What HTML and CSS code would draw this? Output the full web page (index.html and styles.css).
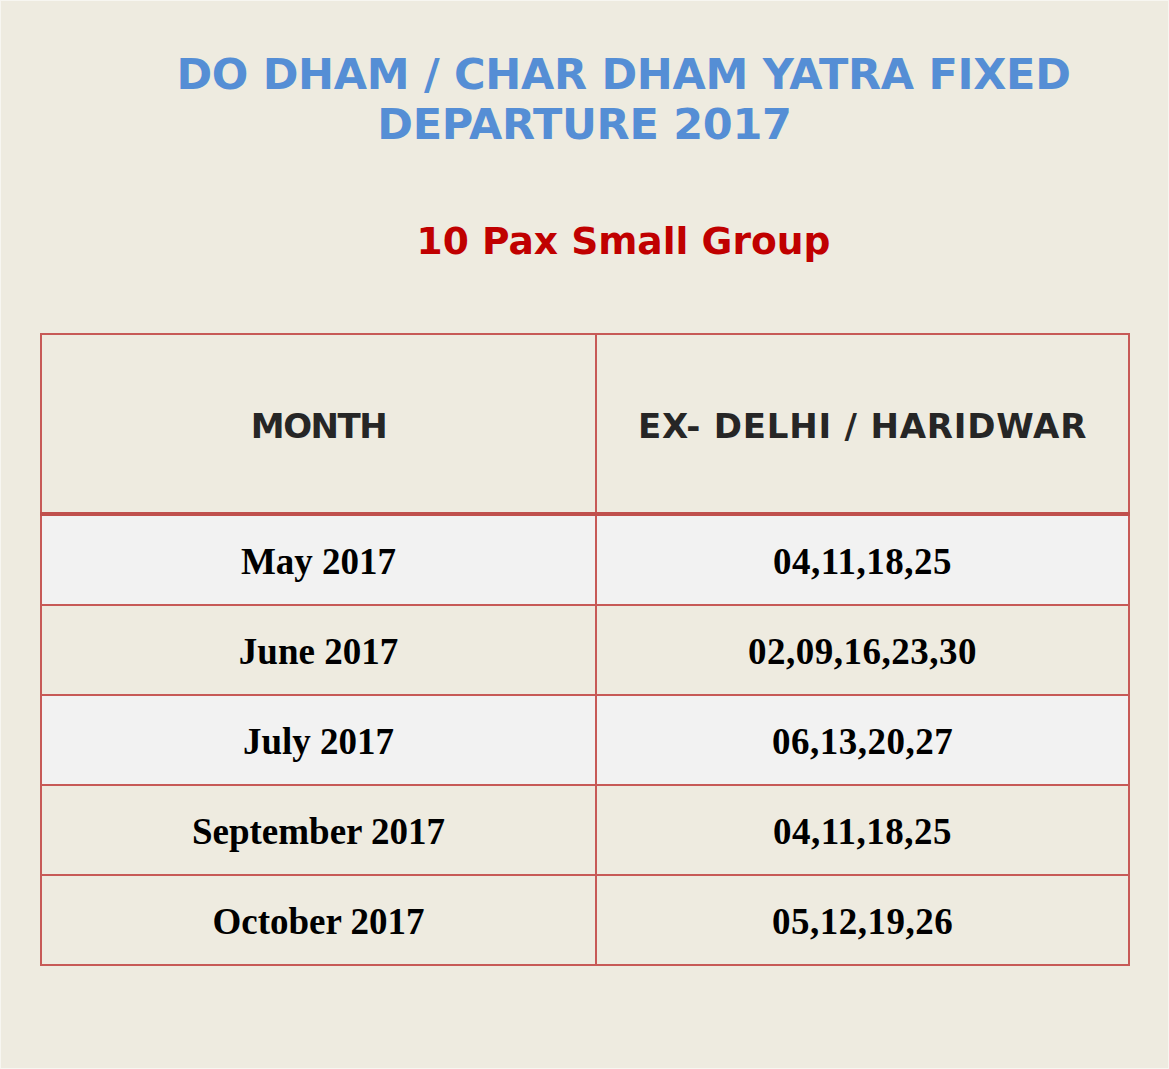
FILE: index.html
```html
<!DOCTYPE html>
<html>
<head>
<meta charset="utf-8">
<link rel="stylesheet" href="styles.css">
</head>
<body>
<div class="page">
  <h1 class="title">DO DHAM / CHAR DHAM YATRA FIXED<br>DEPARTURE 2017</h1>
  <h2 class="subtitle">10 Pax Small Group</h2>
  <table class="dates">
    <thead>
      <tr><th class="c1">MONTH</th><th class="c2">EX- DELHI / HARIDWAR</th></tr>
    </thead>
    <tbody>
      <tr class="alt"><td>May 2017</td><td class="days">04,11,18,25</td></tr>
      <tr><td>June 2017</td><td class="days">02,09,16,23,30</td></tr>
      <tr class="alt"><td>July 2017</td><td class="days">06,13,20,27</td></tr>
      <tr><td>September 2017</td><td class="days">04,11,18,25</td></tr>
      <tr><td>October 2017</td><td class="days">05,12,19,26</td></tr>
    </tbody>
  </table>
</div>
</body>
</html>
```
FILE: styles.css
```css
html, body {
  margin: 0;
  padding: 0;
  background: #eeebe0;
}
.page {
  box-sizing: border-box;
  width: 1169px;
  height: 1069px;
  border: 1px solid #f7f6f1;
  background: #eeebe0;
  padding: 48px 0 0 0;
}
.title {
  margin: 0;
  font-family: "DejaVu Sans", Verdana, sans-serif;
  font-weight: bold;
  font-size: 43px;
  letter-spacing: -0.3px;
  line-height: 50px;
  color: #558ed5;
  text-align: center;
  text-indent: 78px;
  white-space: nowrap;
}
.subtitle {
  margin: 69px 0 0 0;
  padding-left: 78px;
  font-family: "DejaVu Sans", Verdana, sans-serif;
  font-weight: bold;
  font-size: 37.6px;
  line-height: 46px;
  color: #c00000;
  text-align: center;
}
.dates {
  margin: 69px 0 0 39px;
  width: 1090px;
  border-collapse: collapse;
  table-layout: fixed;
}
.dates th, .dates td {
  border: 2px solid #c75a57;
  text-align: center;
  padding: 0;
}
.dates th {
  height: 173px;
  padding-top: 4px;
  font-family: "DejaVu Sans", Verdana, sans-serif;
  font-weight: bold;
  font-size: 34px;
  color: #262626;
  border-bottom: 4px solid #c0504d;
}
.dates th.c1 {
  width: 553px;
  letter-spacing: -1.5px;
}
.dates th.c2 {
  letter-spacing: 0.8px;
}
.dates td {
  height: 86px;
  padding-top: 2px;
  font-family: "Liberation Serif", "Times New Roman", serif;
  font-weight: bold;
  font-size: 37px;
  color: #000;
}
.dates td.days {
  letter-spacing: 0.5px;
}
.dates tr.alt td {
  background: #f2f2f2;
}
```
